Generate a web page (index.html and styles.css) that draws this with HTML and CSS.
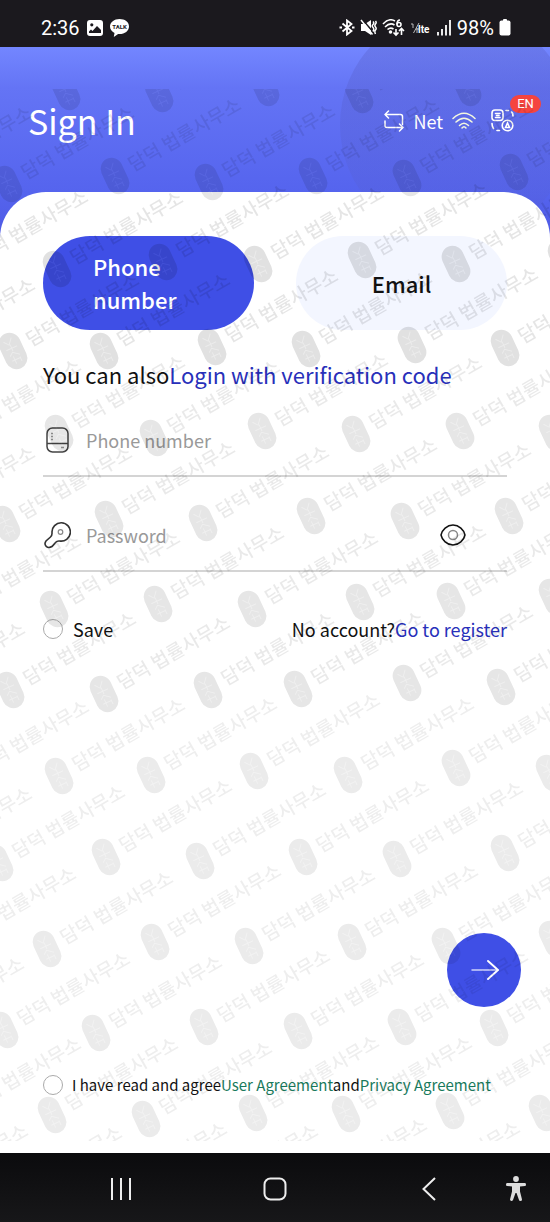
FILE: index.html
```html
<!DOCTYPE html>
<html lang="en">
<head>
<meta charset="utf-8">
<meta name="viewport" content="width=device-width, initial-scale=1">
<title>Sign In</title>
<link rel="stylesheet" href="styles.css">
</head>
<body>
<div class="app">
  <div class="status">
    <span>2:36</span>
    <svg class="status-photo" width="16" height="16" viewBox="0 0 16 16"><path fill="#fff" fill-rule="evenodd" d="M3 0h10a3 3 0 0 1 3 3v10a3 3 0 0 1-3 3H3a3 3 0 0 1-3-3V3a3 3 0 0 1 3-3zM4.800 3.200a1.600 1.600 0 1 0 0 3.200 1.600 1.600 0 0 0 0-3.200zM2 13h12v-3l-4-4-4.500 5L4 9.500l-2 2z"/></svg>
    <svg width="19" height="18" viewBox="0 0 19 18"><path fill="#fff" d="M9.500 0C4.300 0 0 3.400 0 7.500c0 2.800 1.900 5.100 4.500 6.400L3.800 18l4.300-3c6 .6 10.900-2.700 10.900-7.500S14.700 0 9.500 0z"/><text class="talk" x="9.500" y="10" text-anchor="middle">TALK</text></svg>
    <span class="grow"></span>
    <svg width="16" height="17" viewBox="0 0 16 17" fill="none" stroke="#fff" stroke-width="1.800"><path d="M3.500 4.500l9 7.500L8 15.500v-14L12.500 5l-9 7.500"/><path d="M.5 8.500h2.500M13 8.500h2.500"/></svg>
    <svg width="17" height="17" viewBox="0 0 17 17"><path fill="#fff" d="M1 5h4L11 1v15l-6-4H1z"/><path d="M2 0l12 14" stroke="#1b191e" stroke-width="1.500"/><path d="M1 1l11.500 14.500M13 2.500q1.500 1.500 0 3t0 3 0 4M15.500 2q1.300 1.500 0 3t0 3 0 3 0 4" fill="none" stroke="#fff" stroke-width="1.500"/></svg>
    <svg width="23" height="18" viewBox="0 0 23 18" fill="none" stroke="#fff" stroke-width="1.600"><path d="M1 5Q7-1.500 13 2M3 8Q8 3 12.500 6M5.500 10.500Q8.500 8 11.500 10"/><circle cx="8.500" cy="13" r="1" fill="#fff"/><path d="M18 1q-3 0-3 4.500"/><circle cx="17" cy="5.500" r="2"/><path d="M14 10v6M11.500 13.500L14 16l2.500-2.500M19.500 16V9.500M17 12l2.500-2.500L22 12"/></svg>
    <svg width="21" height="12" viewBox="0 0 21 12"><path d="M1 2h2v4M9 1L3.500 11M6 7h3M7 6v5" fill="none" stroke="#bbb"/><text class="lte" x="8" y="11">lte</text></svg>
    <svg width="16" height="17" viewBox="0 0 16 17" stroke="#fff" stroke-width="1.800"><path d="M2 13v3.500M6 10v6.500M10 6v10.500M14 1v15.500"/></svg>
    <span>98%</span>
    <svg width="12" height="17" viewBox="0 0 12 17" fill="#fff"><rect x="4" width="4" height="4" rx="1"/><rect x=".5" y="1.500" width="11" height="15" rx="2"/></svg>
  </div>

  <header class="header">
    <span class="orb"></span>
    <h1>Sign In</h1>
    <a class="net" href="#net">
      <svg width="20" height="22" viewBox="0 0 20 22" fill="none" stroke="#fff" stroke-width="1.500" stroke-linecap="round" stroke-linejoin="round"><path d="M4.500 1L1 4.500 4.500 8M1 4.500h15.500q2 0 2 2v8M15.500 14L19 17.500 15.500 21M19 17.500H3q-2 0-2-2V11"/></svg>
      <span>Net</span>
      <svg width="24" height="18" viewBox="0 0 24 18" fill="none" stroke="#f3f8df" stroke-width="1.500" stroke-linecap="round"><path d="M1 6.500Q12-4 23 6.500M4 10Q12 2.500 20 10M7.500 13.500Q12 9 16.500 13.500"/><path d="M10 16q2-2.500 4 0"/></svg>
    </a>
    <button class="lang" type="button" aria-label="Language">
      <svg width="23" height="23" viewBox="0 0 23 23" fill="none" stroke="#fff" stroke-width="1.600" stroke-linecap="round"><rect x="1" y="1" width="11" height="10.500" rx="3"/><path d="M4.500 4.500h4.500M4.500 8.500h4.500M5.500 6.500h2.500"/><circle cx="16.500" cy="16.500" r="5.300"/><path d="M14.500 18.500l2-4.500 2 4.500zM15 1.500h2.500M20.500 3q1.500 1 1.500 4M1 14.500q0 3 1.500 5M6 21.500h2.500"/></svg>
      <span class="badge">EN</span>
    </button>
  </header>

  <main class="card">
    <div class="tabs">
      <button class="tab tab-active" type="button">Phone number</button>
      <button class="tab" type="button">Email</button>
    </div>
    <p class="hint">You can also<a href="#code">Login with verification code</a></p>
    <form class="form">
      <div class="field">
        <label for="phone" aria-label="Phone number"><svg width="28" height="28" viewBox="0 0 28 28" fill="none" stroke="#444" stroke-width="1.500"><rect x="4" y="2" width="21" height="24" rx="5.500"/><path d="M4 17.500h21"/><path d="M8 7.500h2M8 10.500h2M8 13.500h2M18 21.500h3" stroke="#999"/></svg></label>
        <input id="phone" type="tel" placeholder="Phone number">
      </div>
      <div class="field">
        <label for="password" aria-label="Password"><svg width="28" height="28" viewBox="0 0 28 28" fill="none" stroke="#333" stroke-width="1.600"><path d="M9 11.500a9.200 9.200 0 1 1 7.500 8.500q-2.500-.3-4 1.500L9 25.500q-3.500 2-5.800-.2T3 20l4.500-4q1.800-1.500 1.500-4.500z"/><circle cx="17.500" cy="11" r="2.300" stroke="#888" stroke-width="1.200"/></svg></label>
        <input id="password" type="password" placeholder="Password">
        <button class="eye" type="button" aria-label="Show password"><svg width="26" height="22" viewBox="0 0 26 22" fill="none"><path d="M1 11C2 6 7 1 13 1s11 5 12 10c-1 5-6 10-12 10S2 16 1 11z" stroke="#111" stroke-width="1.500"/><circle cx="13" cy="11" r="4.500" stroke="#888" stroke-width="1.500"/></svg></button>
      </div>
      <div class="options">
        <label class="check"><input type="checkbox"><span>Save</span></label>
        <p>No account?<a href="#register">Go to register</a></p>
      </div>
      <button class="submit" type="submit" aria-label="Sign in"><svg width="30" height="22" viewBox="0 0 30 22" fill="none" stroke="#fff" stroke-linecap="round" stroke-linejoin="round"><path d="M2 11h26" stroke-width="1.500" opacity=".75"/><path d="M18 2l10 9-10 9" stroke-width="1.900"/></svg></button>
      <div class="agree">
        <input id="agree" type="checkbox">
        <p><label for="agree">I have read and agree</label><a href="#user">User Agreement</a>and<a href="#privacy">Privacy Agreement</a></p>
      </div>
    </form>
  </main>

  <nav class="nav">
    <button class="recent" type="button" aria-label="Recent apps"><svg width="22" height="22" viewBox="0 0 22 22" stroke="#eee" stroke-width="2"><path d="M2 0v22M11 0v22M20 0v22"/></svg></button>
    <button type="button" aria-label="Home"><svg width="24" height="24" viewBox="0 0 24 24" fill="none" stroke="#eee" stroke-width="2"><rect x="1.500" y="1.500" width="21" height="21" rx="6"/></svg></button>
    <button type="button" aria-label="Back"><svg width="14" height="24" viewBox="0 0 14 24" fill="none" stroke="#eee" stroke-width="2"><path d="M13 1L1.500 12 13 23"/></svg></button>
    <button class="access" type="button" aria-label="Accessibility"><svg width="20" height="25" viewBox="0 0 20 25" fill="#ddd"><circle cx="10" cy="3" r="2.900"/><path d="M1 7h18q1 0 1 1.500T19 10l-5 .5v5l2 8q0 1.500-1.500 1.500T13 24l-2.500-7h-1L7 24q-.5 1-1.500 1T4 23.500l2-8v-5L1 10Q0 10 0 8.500T1 7z"/></svg></button>
  </nav>

  <svg class="marks" aria-hidden="true" width="550" height="1052" viewBox="0 89 550 1052">
    <defs>
      <g id="m">
        <g transform="rotate(-25)"><rect x="-11" y="-19" width="22" height="38" rx="11"/><path d="M-5-12l4 5 5-6M-6-3h12M0-7v7M-5 4l4-3 6 5M-5 9h9M-2 5v8M4 8v5" fill="none" stroke="#fff" stroke-opacity=".35"/></g>
        <text transform="translate(18 -4) rotate(-30)">담덕 법률사무소</text>
      </g>
    </defs>
    <g class="marks-header">
      <use href="#m" x="-35" y="95"/><use href="#m" x="66" y="92"/><use href="#m" x="159" y="94"/><use href="#m" x="265" y="88"/><use href="#m" x="359" y="95"/><use href="#m" x="467" y="88"/>
      <use href="#m" x="-94" y="184"/><use href="#m" x="8" y="184"/><use href="#m" x="115" y="176"/><use href="#m" x="209" y="182"/><use href="#m" x="313" y="176"/><use href="#m" x="407" y="178"/><use href="#m" x="514" y="172"/>
    </g>
    <g class="marks-strong">
      <use href="#m" x="-38" y="268"/><use href="#m" x="57" y="269"/><use href="#m" x="163" y="262"/><use href="#m" x="258" y="264"/><use href="#m" x="362" y="260"/><use href="#m" x="456" y="264"/><use href="#m" x="562" y="258"/>
      <use href="#m" x="-91" y="356"/><use href="#m" x="13" y="351"/><use href="#m" x="104" y="351"/><use href="#m" x="212" y="347"/><use href="#m" x="306" y="349"/><use href="#m" x="412" y="345"/><use href="#m" x="505" y="348"/>
    </g>
    <g class="marks-mid">
      <use href="#m" x="-45" y="437"/><use href="#m" x="59" y="433"/><use href="#m" x="154" y="438"/><use href="#m" x="262" y="431"/><use href="#m" x="356" y="434"/><use href="#m" x="460" y="431"/><use href="#m" x="553" y="433"/>
      <use href="#m" x="-91" y="524"/><use href="#m" x="6" y="524"/><use href="#m" x="109" y="519"/><use href="#m" x="203" y="523"/><use href="#m" x="311" y="516"/><use href="#m" x="405" y="521"/><use href="#m" x="509" y="516"/>
      <use href="#m" x="-45" y="612"/><use href="#m" x="54" y="609"/><use href="#m" x="158" y="604"/><use href="#m" x="252" y="609"/><use href="#m" x="360" y="602"/><use href="#m" x="451" y="601"/><use href="#m" x="553" y="597"/>
      <use href="#m" x="-101" y="700"/><use href="#m" x="10" y="690"/><use href="#m" x="104" y="694"/><use href="#m" x="208" y="690"/><use href="#m" x="298" y="689"/><use href="#m" x="407" y="683"/><use href="#m" x="501" y="687"/>
    </g>
    <g class="marks-soft">
      <use href="#m" x="-37" y="778"/><use href="#m" x="59" y="776"/><use href="#m" x="151" y="775"/><use href="#m" x="254" y="771"/><use href="#m" x="348" y="775"/><use href="#m" x="456" y="768"/><use href="#m" x="550" y="773"/>
      <use href="#m" x="-94" y="865"/><use href="#m" x="-1" y="863"/><use href="#m" x="106" y="857"/><use href="#m" x="200" y="861"/><use href="#m" x="303" y="857"/><use href="#m" x="397" y="859"/><use href="#m" x="505" y="853"/>
      <use href="#m" x="-50" y="945"/><use href="#m" x="47" y="949"/><use href="#m" x="155" y="942"/><use href="#m" x="249" y="946"/><use href="#m" x="352" y="942"/><use href="#m" x="446" y="946"/><use href="#m" x="553" y="939"/>
      <use href="#m" x="-102" y="1035"/><use href="#m" x="4" y="1030"/><use href="#m" x="96" y="1033"/><use href="#m" x="204" y="1027"/><use href="#m" x="298" y="1031"/><use href="#m" x="402" y="1027"/><use href="#m" x="494" y="1028"/>
      <use href="#m" x="-45" y="1115"/><use href="#m" x="52" y="1115"/><use href="#m" x="146" y="1119"/><use href="#m" x="253" y="1113"/><use href="#m" x="346" y="1114"/><use href="#m" x="450" y="1111"/><use href="#m" x="543" y="1113"/>
      <use href="#m" x="-98" y="1202"/><use href="#m" x="-4" y="1204"/><use href="#m" x="101" y="1200"/><use href="#m" x="192" y="1202"/><use href="#m" x="301" y="1196"/><use href="#m" x="394" y="1199"/>
    </g>
  </svg>
</div>
</body>
</html>
```

FILE: styles.css
```css
* { box-sizing: border-box; }

body {
  margin: 0;
  font-family: "Noto Sans CJK KR", "Noto Sans", sans-serif;
  color: #111;
}

h1, p { margin: 0; font-weight: 400; }
a { text-decoration: none; }
svg { display: block; flex: none; }
button { font: inherit; padding: 0; border: 0; background: none; cursor: pointer; }

.app {
  position: relative;
  display: flex;
  flex-direction: column;
  min-height: 100vh;
  overflow: hidden;
  background: linear-gradient(#7386ff 47px, #6474f5 88px, #5564ee 192px, #4d59e4 240px);
}

/* Status bar */
.status {
  display: flex;
  align-items: center;
  gap: 5px;
  height: 47px;
  padding: 8px 39px 0 41px;
  background: #1b191e;
  color: #fff;
  font: 20px/24px Roboto, sans-serif;
}
.status-photo { margin: 0 2px; }
.grow { flex: 1; }
.talk { font: 700 6px Roboto, sans-serif; fill: #1b191e; }
.lte { font: 700 10px Roboto, sans-serif; fill: #fff; }

/* Header */
.header {
  position: relative;
  display: flex;
  align-items: center;
  height: 145px;
  padding: 2px 36px 0 28px;
  color: #fff;
}
.header h1 { flex: 1; font-size: 34px; line-height: 48px; }
.orb {
  position: absolute;
  z-index: 0;
  top: -38px;
  right: -22px;
  width: 232px;
  height: 232px;
  border-radius: 50%;
  background: linear-gradient(rgba(82, 88, 190, .32), rgba(90, 96, 200, .14));
  clip-path: inset(38px 0 0);
}
.net {
  position: relative;
  display: flex;
  align-items: center;
  gap: 9px;
  margin-right: 15px;
  color: #fff;
  font-size: 18px;
  line-height: 28px;
}
.lang { position: relative; color: #fff; }
.badge {
  position: absolute;
  left: 19px;
  top: -14px;
  width: 31px;
  border-radius: 9px;
  background: #f5443f;
  font: 13px/18px Roboto, sans-serif;
  text-align: center;
}

/* Card */
.card {
  position: relative;
  flex: 1;
  display: flex;
  flex-direction: column;
  padding: 44px 43px 55px;
  border-radius: 46px 46px 0 0;
  background: #fff;
}
.tabs { display: grid; grid-template-columns: 1fr 1fr; gap: 42px; }
.tab {
  height: 94px;
  padding: 0 50px;
  border-radius: 47px;
  background: #f3f6ff;
  color: #111;
  font-size: 22px;
  font-weight: 500;
  line-height: 33px;
}
.tab-active { background: #3f4fe6; color: #fff; text-align: left; }
.hint { margin-top: 28px; font-size: 22px; line-height: 32px; }
.hint a, .options a { color: #2830ba; }

.form { flex: 1; display: flex; flex-direction: column; padding-top: 12px; }
.field {
  display: flex;
  align-items: center;
  height: 95px;
  padding-top: 22px;
  border-bottom: 2px solid #d4d4d4;
}
.field:first-child { height: 75px; padding-top: 3px; }
.field input {
  flex: 1;
  min-width: 0;
  margin-left: 15px;
  padding: 0;
  border: 0;
  outline: 0;
  background: none;
  font: inherit;
  font-size: 18px;
  line-height: 28px;
}
.field input::placeholder { color: #999; opacity: 1; }
.eye { margin-right: 41px; }

.options {
  display: flex;
  justify-content: space-between;
  margin-top: 42px;
  font-size: 18px;
  line-height: 30px;
}
.check { display: flex; align-items: center; gap: 10px; }
input[type="checkbox"] {
  appearance: none;
  flex: none;
  width: 20px;
  height: 20px;
  margin: 0;
  border: 1px solid #aaa;
  border-radius: 50%;
}
.submit {
  display: grid;
  place-items: center;
  align-self: flex-end;
  width: 74px;
  height: 74px;
  margin: auto -14px 65px 0;
  padding-left: 2px;
  border-radius: 50%;
  background: #3f4fe6;
}
.agree {
  display: flex;
  align-items: center;
  gap: 9px;
  font-size: 15px;
  line-height: 26px;
  white-space: nowrap;
}
.agree a { color: #197a5c; }

/* Navigation bar */
.nav {
  display: grid;
  grid-template-columns: 154fr 154fr 154fr 44fr;
  align-items: center;
  justify-items: center;
  height: 69px;
  padding: 2px 0 0 8%;
  background: linear-gradient(#0b0b0d, #171719);
}
.access { justify-self: start; }

/* Repeating law-office mark laid over the page */
.marks { position: absolute; top: 89px; left: 0; pointer-events: none; }
.marks text { font: 500 19px "Noto Sans CJK KR", sans-serif; opacity: .85; }
.marks-header { opacity: .1; }
.marks-strong { opacity: .12; }
.marks-mid { opacity: .1; }
.marks-soft { opacity: .08; }
```
